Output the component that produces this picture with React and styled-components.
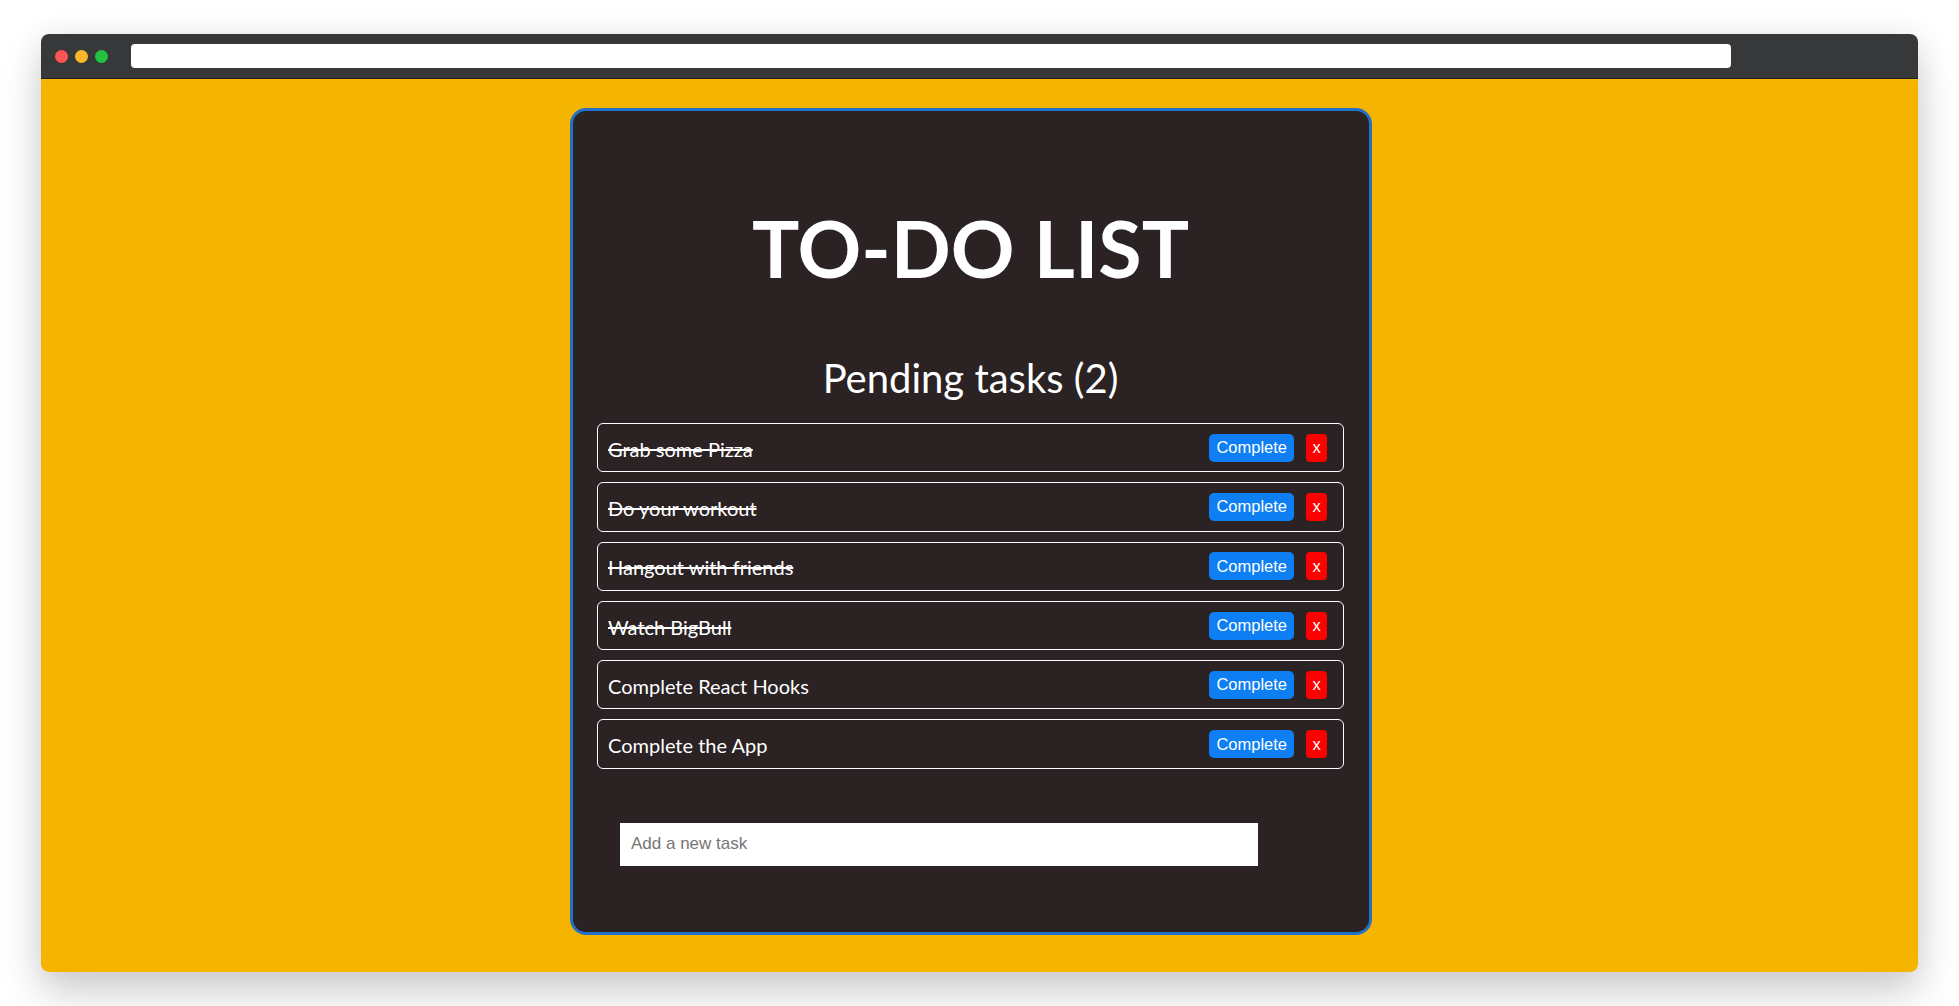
import React from "react";
import styled, { createGlobalStyle } from "styled-components";

const Global = createGlobalStyle`
  html, body { margin: 0; padding: 0; background: #ffffff; }
  * { box-sizing: border-box; }
`;

const Page = styled.div`
  padding: 34px 41px;
  height: 1006px;
  overflow: hidden;
`;

const Window = styled.div`
  height: 938px;
  border-radius: 8px;
  overflow: hidden;
  display: flex;
  flex-direction: column;
  box-shadow: 0 22px 40px rgba(0, 0, 0, 0.18), 0 0 30px rgba(0, 0, 0, 0.07);
`;

const TitleBar = styled.div`
  height: 45px;
  flex: none;
  background: #37383a;
  border-bottom: 1px solid #1f1f20;
  display: flex;
  align-items: center;
  padding: 0 0 0 14px;
`;

const Dots = styled.div`
  display: flex;
  gap: 7px;
  margin-right: 23px;
`;

const Dot = styled.span`
  width: 13px;
  height: 13px;
  border-radius: 50%;
  background: ${(p) => p.$c};
`;

const Address = styled.div`
  width: 1600px;
  height: 24px;
  background: #ffffff;
  border-radius: 4px;
  margin-top: -1px;
`;

const Viewport = styled.div`
  flex: 1;
  background: #f4b400;
  display: flex;
  justify-content: center;
  align-items: flex-start;
  padding: 29px 17px 0 0;
`;

const Card = styled.div`
  width: 802px;
  height: 827px;
  background: #2a2223;
  border: 3px solid #2270c9;
  border-radius: 16px;
  padding: 0 25px 0 24px;
  display: flex;
  flex-direction: column;
  font-family: "Lato", "Open Sans", sans-serif;
  color: #ffffff;
`;

const Heading = styled.h1`
  margin: 89px 0 0;
  font-size: 79px;
  line-height: 96px;
  font-weight: 700;
  text-align: center;
`;

const Pending = styled.h2`
  margin: 58px 0 0;
  font-size: 40px;
  line-height: 48px;
  font-weight: 400;
  text-align: center;
`;

const List = styled.ul`
  list-style: none;
  margin: 21px 0 0;
  padding: 0;
  display: flex;
  flex-direction: column;
  gap: 10px;
`;

const Row = styled.li`
  height: 49.3px;
  border: 1px solid #ffffff;
  border-radius: 6px;
  display: flex;
  align-items: center;
  padding: 0 16px 0 10px;
`;

const TaskText = styled.span`
  flex: 1;
  font-size: 20px;
  padding-top: 2px;
  text-decoration: ${(p) => (p.$done ? "line-through" : "none")};
`;

const Btn = styled.button`
  height: 28px;
  border: none;
  color: #ffffff;
  font-family: "Liberation Sans", Arial, sans-serif;
  font-size: 16.5px;
  padding: 0 ${(p) => (p.$danger ? "6px" : "7px")};
  border-radius: ${(p) => (p.$danger ? "4px" : "5px")};
  background: ${(p) => (p.$danger ? "#ff0000" : "#0d7ff3")};
  margin-left: ${(p) => (p.$danger ? "12px" : "0")};
  min-width: ${(p) => (p.$danger ? "21px" : "84px")};
  cursor: pointer;
`;

const Input = styled.input`
  margin: 54px 0 0 23px;
  width: 638px;
  height: 43px;
  border: none;
  outline: none;
  padding: 0 11px;
  font-family: "Liberation Sans", Arial, sans-serif;
  font-size: 17px;
  background: #ffffff;
  &::placeholder { color: #757575; }
`;

const tasks = [
  { text: "Grab some Pizza", done: true },
  { text: "Do your workout", done: true },
  { text: "Hangout with friends", done: true },
  { text: "Watch BigBull", done: true },
  { text: "Complete React Hooks", done: false },
  { text: "Complete the App", done: false },
];

export default function App() {
  return (
    <Page>
      <Global />
      <Window>
        <TitleBar>
          <Dots>
            <Dot $c="#fe5453" />
            <Dot $c="#fdb52c" />
            <Dot $c="#22c13f" />
          </Dots>
          <Address />
        </TitleBar>
        <Viewport>
          <Card>
            <Heading>TO-DO LIST</Heading>
            <Pending>Pending tasks (2)</Pending>
            <List>
              {tasks.map((t) => (
                <Row key={t.text}>
                  <TaskText $done={t.done}>{t.text}</TaskText>
                  <Btn>Complete</Btn>
                  <Btn $danger>x</Btn>
                </Row>
              ))}
            </List>
            <Input placeholder="Add a new task" />
          </Card>
        </Viewport>
      </Window>
    </Page>
  );
}
